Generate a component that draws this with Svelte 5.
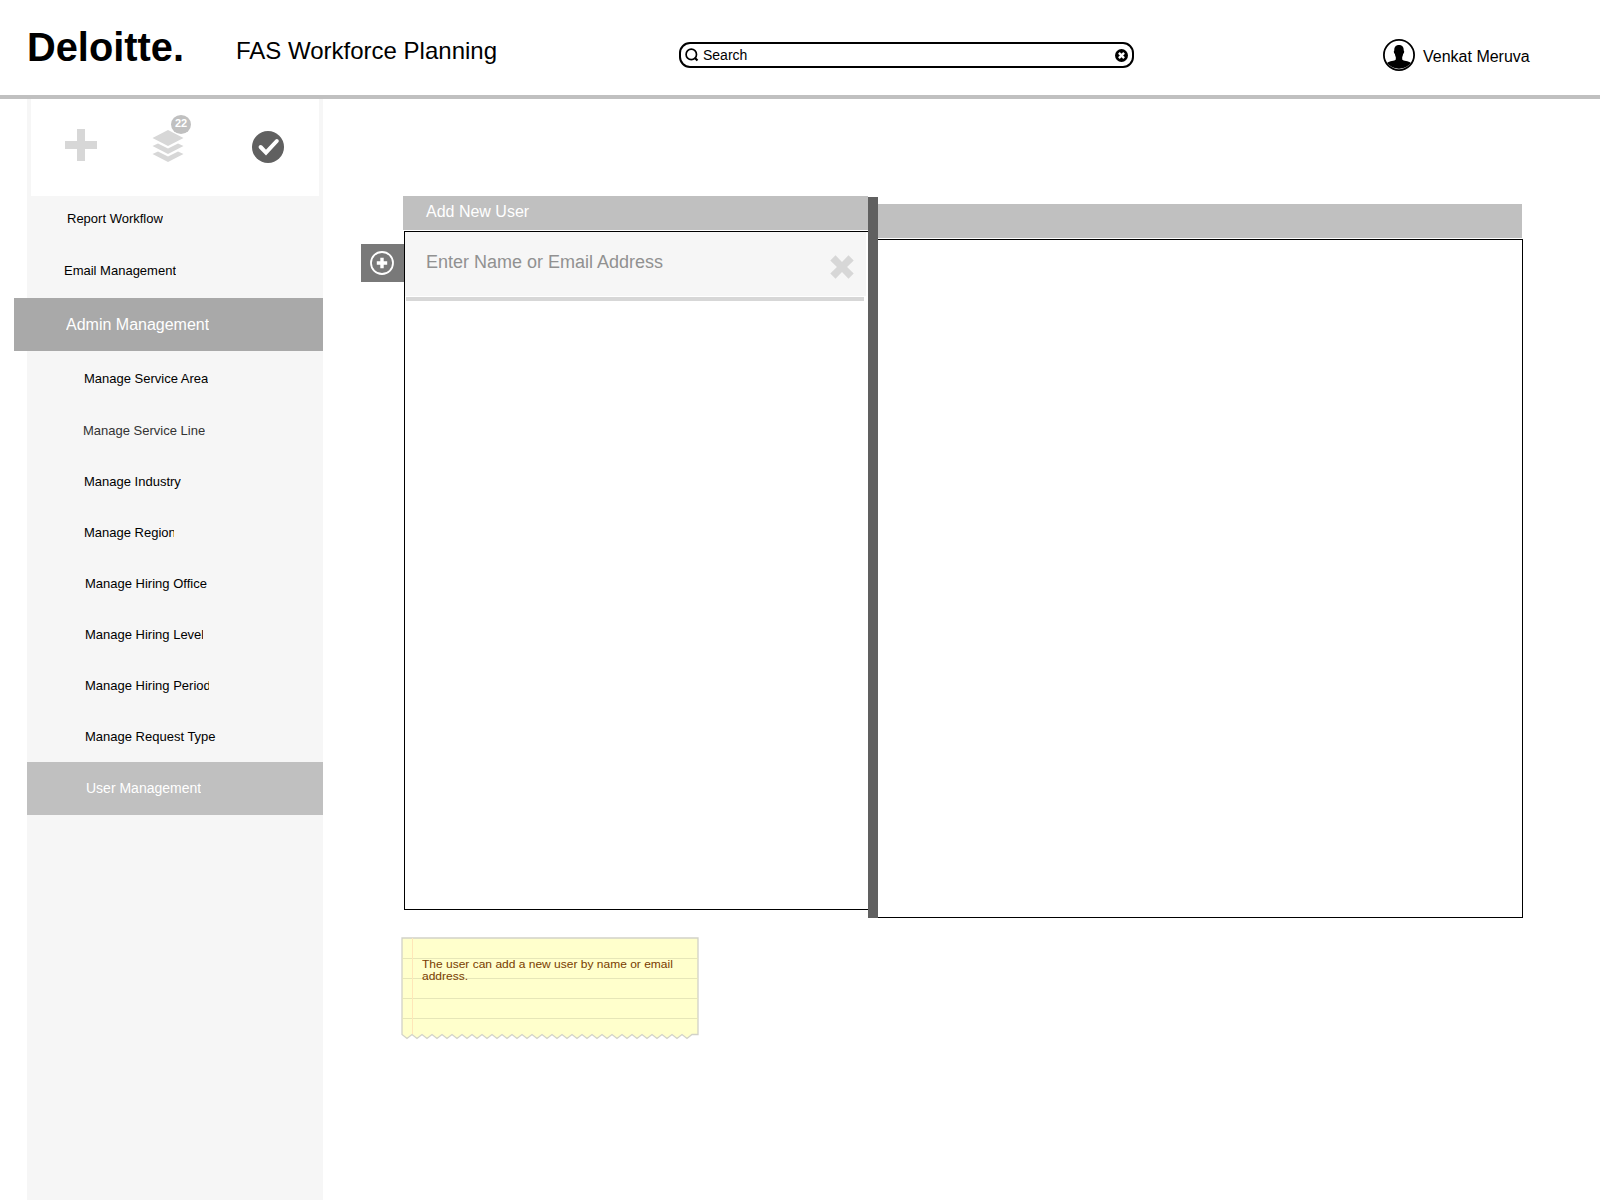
<script lang="ts">
	interface MenuItem {
		label: string;
		indent: number;
		clip?: number;
		kind?: string;
	}

	const mainItems: MenuItem[] = [
		{ label: 'Report Workflow', indent: 40, clip: 96, kind: 'first' },
		{ label: 'Email Management', indent: 37, kind: 'second' },
		{ label: 'Admin Management', indent: 52, kind: 'active' }
	];

	const adminItems: MenuItem[] = [
		{ label: 'Manage Service Area', indent: 57, kind: 'lead' },
		{ label: 'Manage Service Line', indent: 56, kind: 'muted' },
		{ label: 'Manage Industry', indent: 57 },
		{ label: 'Manage Region', indent: 57, clip: 90 },
		{ label: 'Manage Hiring Office', indent: 58 },
		{ label: 'Manage Hiring Level', indent: 58, clip: 118 },
		{ label: 'Manage Hiring Period', indent: 58, clip: 124 },
		{ label: 'Manage Request Type', indent: 58 },
		{ label: 'User Management', indent: 59, kind: 'selected' }
	];

	// torn bottom edge of the note, right to left
	let edge = '';
	for (let i = 0; i < 29; i++) {
		edge += ` L${286 - i * 10} 101.5 L${281 - i * 10} 97.5`;
	}
	const paper = `M1 1 H297 V97.5 H291${edge} L1 97.5 Z`;
	const rules = [21.5, 41.5, 61.5, 81.5];
</script>

<div class="page">
	<header>
		<div class="logo">Deloitte.</div>
		<h1>FAS Workforce Planning</h1>
		<div class="search">
			<svg class="lens" width="14" height="14" viewBox="0 0 14 14">
				<circle cx="6.3" cy="6.4" r="5.2" fill="none" stroke="#000" stroke-width="1.7" />
				<path d="M9.7 9.7 L12.5 12.5" stroke="#000" stroke-width="2.2" />
			</svg>
			<span>Search</span>
			<svg class="clear" width="13" height="13" viewBox="0 0 13 13">
				<circle cx="6.5" cy="6.5" r="6.5" />
				<path d="M3.9 3.9 L9.1 9.1 M9.1 3.9 L3.9 9.1" stroke="#fff" stroke-width="2.4" />
			</svg>
		</div>
		<div class="user">
			<svg width="32" height="32" viewBox="0 0 32 32">
				<circle cx="16" cy="16" r="15.1" fill="#fff" stroke="#000" stroke-width="1.8" />
				<path d="M16 6 C12.5 6 11.2 8.3 11.3 11.5 C10.4 11.8 10.9 14.6 11.9 15 C12.1 16.5 12.4 17.3 12.8 18 V20.4 C11.8 22 6.5 21.6 4 24 A15.5 15.5 0 0 0 28 24 C25.5 21.6 20.2 22 19.2 20.4 V18 C19.6 17.3 19.9 16.5 20.1 15 C21.1 14.6 21.6 11.8 20.7 11.5 C20.8 8.3 19.5 6 16 6 Z" />
			</svg>
			<span>Venkat Meruva</span>
		</div>
	</header>

	<div class="body">
		<aside>
			<div class="tools">
				<svg class="plus" width="32" height="32" viewBox="0 0 32 32">
					<path d="M12 0 H20 V12 H32 V20 H20 V32 H12 V20 H0 V12 H12 Z" fill="#d7d7d7" />
				</svg>
				<div class="stack">
					<svg width="32" height="32" viewBox="0 0 32 32">
						<g fill="#d7d7d7">
							<path d="M16 0 L31.5 8 L16 16 L0.5 8 Z" />
							<path d="M0.5 16 L6 13.6 L16 18.6 L26 13.6 L31.5 16 L16 24 Z" />
							<path d="M0.5 24 L6 21.6 L16 26.6 L26 21.6 L31.5 24 L16 32 Z" />
						</g>
					</svg>
					<span class="badge">22</span>
				</div>
				<svg class="check" width="32" height="32" viewBox="0 0 32 32">
					<circle cx="16" cy="16" r="16" fill="#606060" />
					<path d="M8.6 16 L14 21.6 L24.8 10" fill="none" stroke="#fff" stroke-width="4" stroke-linecap="round" />
				</svg>
			</div>

			<nav>
				{#each [...mainItems, ...adminItems] as item}
					<div class="item {item.kind ?? ''}" style="padding-left: {item.indent}px">
						<span style="width: {item.clip ? item.clip + 'px' : 'auto'}">{item.label}</span>
					</div>
				{/each}
			</nav>
		</aside>

		<main>
			<div class="panels">
				<button class="add" aria-label="Add user">
					<svg width="24" height="24" viewBox="0 0 24 24">
						<circle cx="12" cy="12" r="11" fill="none" stroke="#fff" stroke-width="1.8" />
						<path d="M12 6.8 V17.2 M6.8 12 H17.2" stroke="#fff" stroke-width="3.4" />
					</svg>
				</button>
				<section class="left">
					<h2>Add New User</h2>
					<div class="box">
						<div class="entry">
							<span>Enter Name or Email Address</span>
							<svg width="24" height="24" viewBox="0 0 24 24">
								<path d="M5.5 0.3 L12 6.9 L18.5 0.3 L23.7 5.5 L17.1 12 L23.7 18.5 L18.5 23.7 L12 17.1 L5.5 23.7 L0.3 18.5 L6.9 12 L0.3 5.5 Z" fill="#d7d7d7" />
							</svg>
						</div>
						<div class="underline"></div>
					</div>
				</section>
				<div class="divider"></div>
				<section class="right">
					<h2></h2>
					<div class="box"></div>
				</section>
			</div>

			<div class="note">
				<svg width="298" height="104" viewBox="0 0 298 104">
					<path d={paper} fill="#ffffcc" stroke="#d2d2c8" stroke-width="1.3" />
					{#each rules as y}
						<path d="M1 {y} H297" stroke="#e6e6b8" />
					{/each}
					<path d="M11.5 1 V97" stroke="#ffe6b8" />
				</svg>
				<p>The user can add a new user by name or email address.</p>
			</div>
		</main>
	</div>
</div>

<style>
	:global(body) {
		background: #fff;
	}

	.page {
		width: 1600px;
		height: 1200px;
		overflow: hidden;
		display: flex;
		flex-direction: column;
		font-family: 'Liberation Sans', Arial, sans-serif;
		color: #000;
	}

	svg {
		display: block;
		flex: none;
	}

	header {
		box-sizing: border-box;
		height: 99px;
		flex: none;
		border-bottom: 4px solid #c0c0c0;
		display: flex;
		align-items: flex-start;
		white-space: nowrap;
	}

	.logo {
		width: 209px;
		padding: 24px 0 0 27px;
		box-sizing: border-box;
		font-size: 39.8px;
		line-height: 46px;
		font-weight: bold;
	}

	h1 {
		margin: 0;
		padding-top: 37px;
		padding-left: 27px;
		width: 416px;
		font-size: 24px;
		line-height: 28px;
		font-weight: normal;
	}

	.search {
		box-sizing: border-box;
		width: 455px;
		height: 26px;
		margin: 42px 0 0 27px;
		padding: 0 4px;
		border: 2px solid #000;
		border-radius: 11px;
		display: flex;
		align-items: center;
		font-size: 14px;
	}

	.search span {
		flex: 1;
		padding-left: 4px;
	}

	.user {
		margin: 39px 0 0 249px;
		display: flex;
		gap: 8px;
		font-size: 16px;
		line-height: 35px;
	}

	.body {
		flex: 1;
		display: flex;
		min-height: 0;
	}

	aside {
		width: 296px;
		margin-left: 27px;
		flex: none;
		background: #f6f6f6;
	}

	.tools {
		box-sizing: border-box;
		height: 97px;
		margin: 0 4px;
		padding: 30px 35px 0 34px;
		background: #fff;
		display: flex;
		align-items: flex-start;
	}

	.stack {
		position: relative;
		margin: 1px 0 0 55px;
	}

	.badge {
		position: absolute;
		left: 19px;
		top: -15px;
		width: 20px;
		height: 19px;
		border-radius: 50%;
		background: #c0c0c0;
		color: #fff;
		font-size: 11px;
		line-height: 17px;
		font-weight: bold;
		text-align: center;
	}

	.check {
		margin: 2px 0 0 68px;
	}

	.item {
		box-sizing: border-box;
		height: 51px;
		display: flex;
		align-items: center;
		font-size: 13px;
		white-space: nowrap;
	}

	.item span {
		overflow: hidden;
	}

	.item.first {
		height: 45px;
		margin-bottom: 3px;
	}

	.item.second,
	.item.lead {
		height: 54px;
	}

	.item.second {
		padding-bottom: 2px;
	}

	.item.active {
		height: 53px;
		margin-left: -13px;
		background: #a9a9a9;
		color: #fff;
		font-size: 16px;
	}

	.item.muted {
		color: #333;
	}

	.item.selected {
		height: 53px;
		padding-bottom: 2px;
		background: #c0c0c0;
		color: #fff;
		font-size: 14px;
	}

	main {
		flex: 1;
		padding: 97px 0 0 38px;
	}

	.panels {
		display: flex;
		align-items: flex-start;
	}

	.add {
		width: 43px;
		height: 38px;
		margin: 48px 0 0;
		padding: 0 0 0 9px;
		border: 0;
		background: #797979;
		display: flex;
		align-items: center;
	}

	h2 {
		margin: 0 0 1px;
		height: 34px;
		background: #c0c0c0;
		color: #fff;
		font-size: 16px;
		line-height: 31px;
		font-weight: normal;
	}

	.box {
		box-sizing: border-box;
		height: 679px;
		border: 1px solid #000;
	}

	.left {
		width: 465px;
		margin-left: -1px;
	}

	.left h2 {
		padding-left: 23px;
	}

	.left .box {
		margin-left: 1px;
		border-right: 0;
	}

	.entry {
		box-sizing: border-box;
		width: 461px;
		height: 64px;
		padding: 0 12px 0 21px;
		background: #f6f6f6;
		display: flex;
		justify-content: space-between;
		color: #919191;
		font-size: 18px;
		line-height: 60px;
	}

	.entry svg {
		margin-top: 23px;
	}

	.underline {
		width: 458px;
		height: 4px;
		margin: 1px 0 0 1px;
		background: #d7d7d7;
	}

	.divider {
		width: 10px;
		height: 721px;
		margin-top: 1px;
		background: #606060;
	}

	.right {
		width: 645px;
		margin-top: 8px;
	}

	.right h2 {
		margin-right: 1px;
	}

	.right .box {
		border-left: 0;
	}

	.note {
		position: relative;
		width: 298px;
		margin: 19px 0 0 40px;
	}

	/* text sits on top of the ruled paper, slightly widened */
	.note p {
		position: absolute;
		left: 21px;
		top: 21px;
		width: 240px;
		margin: 0;
		color: #783c00;
		font-size: 11px;
		line-height: 12px;
		transform: scaleX(1.091);
		transform-origin: left top;
	}
</style>
